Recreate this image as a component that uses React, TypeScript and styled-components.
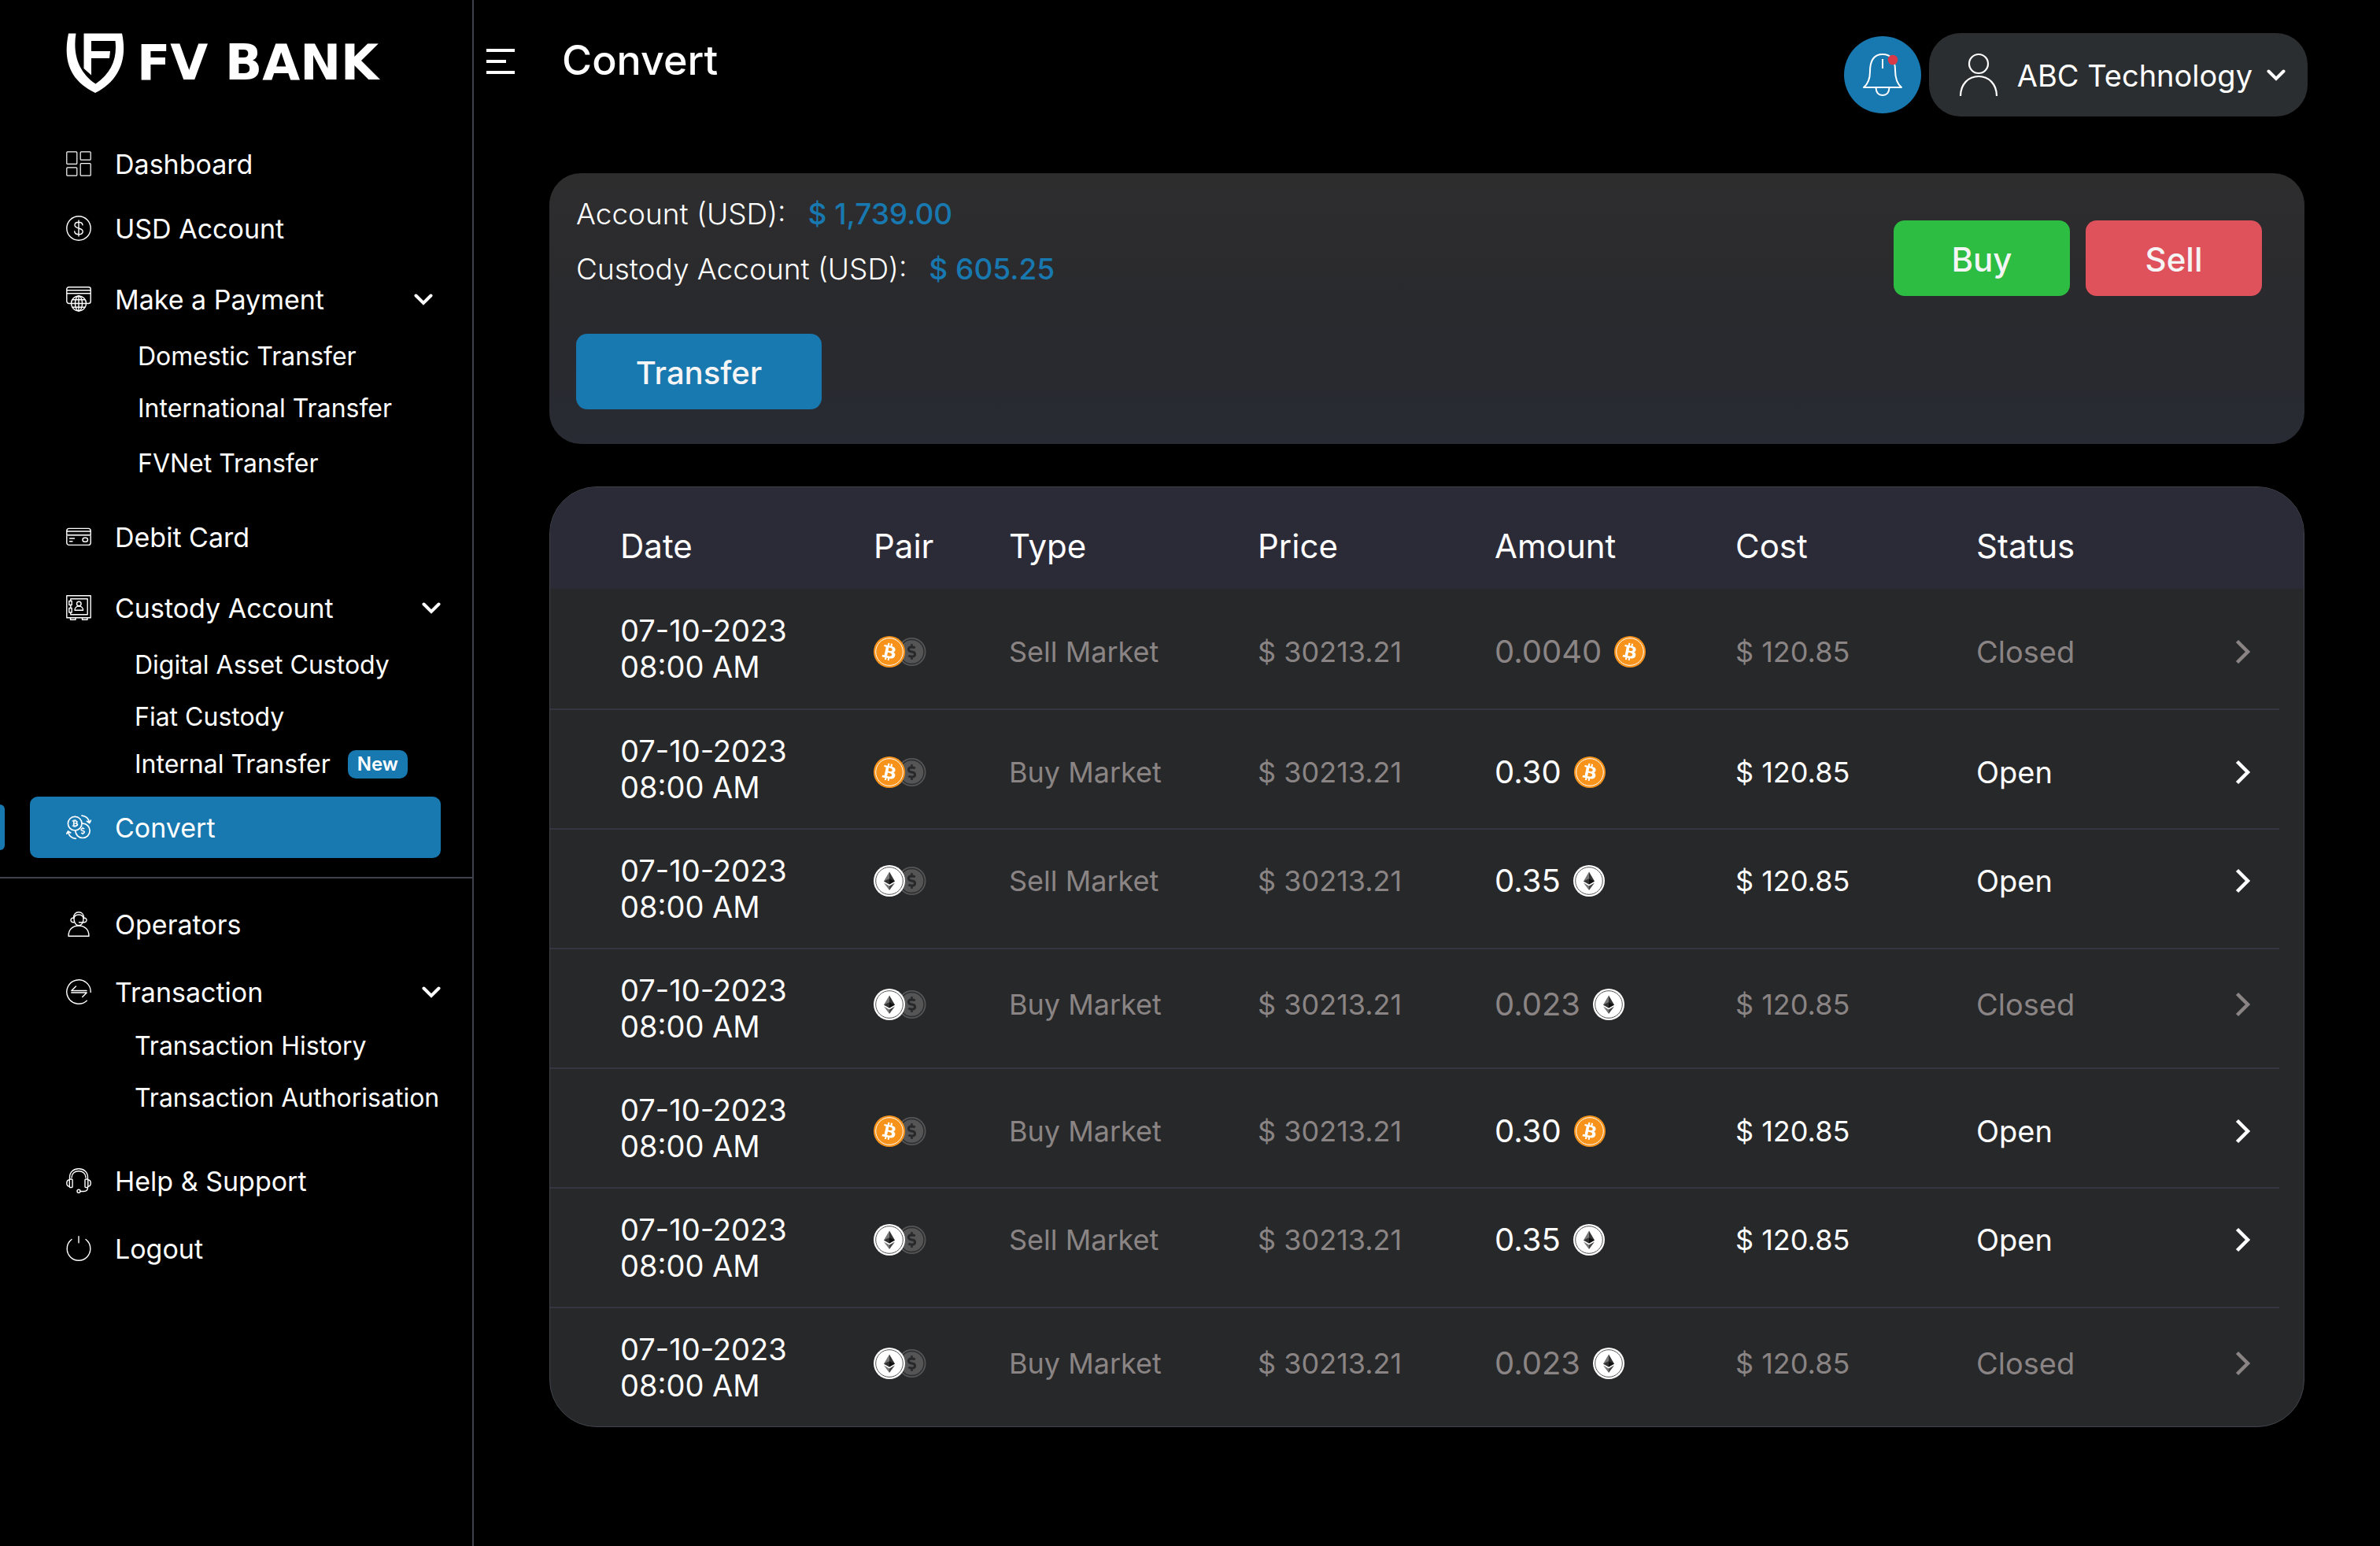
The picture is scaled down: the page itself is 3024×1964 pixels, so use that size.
import React from "react";
import styled, { createGlobalStyle } from "styled-components";
import { FaBtc, FaDollarSign } from "react-icons/fa";

const GlobalStyle = createGlobalStyle`
  *, *::before, *::after { box-sizing: border-box; }
  body {
    margin: 0;
    background: #000;
    color: #fff;
    font-family: Inter, "Liberation Sans", sans-serif;
  }
  button {
    font: inherit;
    color: inherit;
    background: none;
    border: 0;
    padding: 0;
    cursor: pointer;
  }
  a { color: inherit; text-decoration: none; }
  ul { list-style: none; margin: 0; padding: 0; }
  svg { display: block; flex: none; }
`;

/* ---------- layout ---------- */

const Page = styled.div`
  display: grid;
  grid-template-columns: 602px minmax(0, 1fr);
  min-height: 100vh;
`;

const Sidebar = styled.aside`
  border-right: 2px solid #3f424c;
`;

const Main = styled.main`
  display: flex;
  flex-direction: column;
`;

/* ---------- sidebar ---------- */

const Brand = styled.a`
  display: flex;
  align-items: center;
  gap: 16px;
  height: 160px;
  padding: 0 0 0 84px;
`;

const BrandName = styled.span`
  font-family: "DejaVu Sans", sans-serif;
  font-weight: 700;
  font-size: 62px;
  line-height: 72px;
  white-space: nowrap;
`;

const Nav = styled.nav`
  padding: 16px 0;
`;

const Item = styled.li<{ $gap?: number }>`
  position: relative;
  margin-top: ${(p) => p.$gap ?? 0}px;
  padding: 0 40px 0 38px;
`;

const rowStyles = `
  display: flex;
  align-items: center;
  gap: 30px;
  width: 100%;
  padding-left: 46px;
  text-align: left;
  font-size: 34px;
  line-height: 40px;
  white-space: nowrap;
`;

const NavLink = styled.a<{ $active?: boolean }>`
  ${rowStyles}
  height: ${(p) => (p.$active ? 78 : 64)}px;
  border-radius: 10px;
  background: ${(p) => (p.$active ? "#1878b0" : "transparent")};
`;

const NavToggle = styled.button<{ $inset?: number }>`
  ${rowStyles}
  height: 64px;
  padding-right: ${(p) => p.$inset ?? 0}px;
`;

const RowLabel = styled.span`
  flex: 1;
  padding-top: 2px;
`;

const ActiveTab = styled.span`
  position: absolute;
  left: 0;
  top: 10px;
  width: 6px;
  height: 58px;
  border-radius: 0 8px 8px 0;
  background: #1878b0;
`;

const SubList = styled.ul<{ $indent: number }>`
  margin: 0 -40px 0 ${(p) => p.$indent}px;
`;

const SubItem = styled.li<{ $gap?: number }>`
  margin-top: ${(p) => p.$gap ?? 0}px;
`;

const SubLink = styled.a`
  display: flex;
  align-items: center;
  gap: 22px;
  height: 60px;
  padding-top: 2px;
  font-size: 32px;
  line-height: 36px;
  white-space: nowrap;
`;

const NewBadge = styled.span`
  padding: 0 12px;
  border-radius: 10px;
  background: #1878b0;
  font-size: 24px;
  font-weight: 600;
  line-height: 36px;
`;

const Divider = styled.hr`
  height: 2px;
  margin: 24px 0 0;
  border: 0;
  background: #3f424c;
`;

/* ---------- header ---------- */

const Header = styled.header`
  display: flex;
  justify-content: space-between;
  align-items: flex-start;
  padding: 42px 92px 0 16px;
`;

const HeaderLeft = styled.div`
  display: flex;
  align-items: center;
  gap: 60px;
  height: 72px;
`;

const Title = styled.h1`
  margin: 0;
  padding-bottom: 2px;
  font-size: 52px;
  font-weight: 500;
  line-height: 60px;
`;

const HeaderRight = styled.div`
  display: flex;
  align-items: center;
  gap: 10px;
`;

const BellButton = styled.button`
  display: grid;
  place-items: center;
  width: 98px;
  height: 98px;
  border-radius: 50%;
  background: #1878b0;
`;

const ProfileButton = styled.button`
  display: flex;
  align-items: center;
  height: 106px;
  padding: 0 28px 0 38px;
  border-radius: 40px;
  background: #2b2e30;
  font-size: 38px;
  line-height: 48px;
  white-space: nowrap;
`;

const ProfileName = styled.span`
  margin: 0 18px 0 24px;
  padding-top: 2px;
`;

/* ---------- content ---------- */

const Content = styled.div`
  display: flex;
  flex-direction: column;
  gap: 54px;
  padding: 72px 96px 96px;
`;

const BalanceCard = styled.section`
  display: flex;
  justify-content: space-between;
  align-items: flex-start;
  padding: 17px 54px 44px 34px;
  border-radius: 40px;
  background: linear-gradient(180deg, #2e2d2e 0%, #292a2e 55%, #282b33 100%);
`;

const Balances = styled.dl`
  margin: 0 0 47px;
`;

const Balance = styled.div`
  display: flex;
  gap: 28px;
  font-size: 37px;
  line-height: 70px;
`;

const BalanceLabel = styled.dt`
  font-weight: 300;
`;

const BalanceValue = styled.dd`
  margin: 0;
  font-weight: 500;
  color: #1878b0;
`;

const ActionButton = styled.button<{ $color: string; $width: number; $size: number }>`
  width: ${(p) => p.$width}px;
  height: 96px;
  padding-top: 2px;
  border-radius: 14px;
  background: ${(p) => p.$color};
  color: #f5f5f5;
  font-size: ${(p) => p.$size}px;
  font-weight: 500;
`;

const Trade = styled.div`
  display: flex;
  gap: 20px;
  padding-top: 43px;
`;

const TableCard = styled.section`
  overflow: hidden;
  border: 1px solid #41434b;
  border-radius: 60px;
  background: #27282a;
`;

const Table = styled.table`
  display: block;
  font-size: 38px;
  line-height: 46px;
`;

const Head = styled.thead`
  display: block;
  padding-right: 31px;
  background: #2b2b38;
`;

const Body = styled.tbody`
  display: block;
  padding-right: 31px;
`;

const Row = styled.tr`
  display: grid;
  grid-template-columns: 322fr 172fr 316fr 301fr 306fr 306fr 327fr 58fr;
  align-items: center;
  padding-left: 89px;
`;

const HeadRow = styled(Row)`
  height: 129px;
  padding-top: 20px;
`;

const BodyRow = styled(Row)`
  height: 152px;
  & + & {
    border-top: 2px solid #34353f;
  }
`;

const HeadCell = styled.th`
  padding: 0;
  text-align: left;
  font-size: 42px;
  font-weight: 400;
`;

const DateCell = styled.td`
  padding: 0;
`;

/* A positive shift pads the top of the cell, a negative one the bottom. */
const Cell = styled.td<{ $shift: number; $muted?: boolean; $size?: number }>`
  display: flex;
  align-items: center;
  gap: 16px;
  padding: ${(p) => Math.max(p.$shift, 0)}px 0 ${(p) => Math.max(-p.$shift, 0)}px;
  color: ${(p) => (p.$muted ? "#8a8484" : "#fff")};
  font-size: ${(p) => p.$size ?? 38}px;
  white-space: nowrap;
`;

const RowButton = styled.button`
  padding: 0 2px;
`;

/* ---------- icons ---------- */

const Glyph = ({ children, w = 1.4 }: { children: React.ReactNode; w?: number }) => (
  <svg
    width="32"
    height="32"
    viewBox="0 0 32 32"
    fill="none"
    stroke="#fff"
    strokeWidth={w}
    strokeLinecap="round"
    strokeLinejoin="round"
    aria-hidden
  >
    {children}
  </svg>
);

const DashboardIcon = () => (
  <Glyph w={1.2}>
    <rect x="0.8" y="0.8" width="13" height="15.6" rx="1" />
    <rect x="18.2" y="0.8" width="13" height="10.4" rx="1" />
    <rect x="0.8" y="20.8" width="13" height="10.4" rx="1" />
    <rect x="18.2" y="15.6" width="13" height="15.6" rx="1" />
  </Glyph>
);

const DollarIcon = () => (
  <Glyph>
    <circle cx="16" cy="16" r="15.2" />
    <path d="M21 11.8c-.3-2.2-2.3-3.5-5-3.5s-5 1.400-5 3.700c0 5.300 10.200 2.600 10.200 8 0 2.400-2.300 3.800-5.200 3.800s-5.100-1.500-5.300-3.900M16 6v20" />
  </Glyph>
);

const PaymentIcon = () => (
  <Glyph>
    <path d="M6.500 21.500H3.600a2.800 2.800 0 0 1-2.800-2.800V3.400A2.600 2.600 0 0 1 3.400.8h25.200a2.600 2.600 0 0 1 2.600 2.600v15.300a2.800 2.800 0 0 1-2.800 2.800h-2.900M.8 4.800h30.400M.8 8.800h30.400" />
    <circle cx="16" cy="21.500" r="9.500" fill="#000" />
    <ellipse cx="16" cy="21.500" rx="4.500" ry="9.500" />
    <path d="M16 12v19M6.500 21.500h19M8 16.800h16M8 26.200h16" />
  </Glyph>
);

const CardIcon = () => (
  <Glyph>
    <rect x="0.8" y="5.400" width="30.400" height="21" rx="3" />
    <path d="M.8 9h30.400M.8 13.500h30.400" />
    <path d="M.8 14.300h30.400" stroke="#aaa" />
    <path d="M4.500 18h6M4.500 21.800h3.500" />
    <rect x="21" y="17.300" width="6.500" height="5" rx="2.500" />
  </Glyph>
);

const SafeIcon = () => (
  <Glyph>
    <path d="M.8.8h30.400v28H.8zM5.500 29v2.300h6.500V29M20.500 29v2.300H27V29" />
    <path d="M5.800 7V4.800h21.400v20H5.800v-2.200M5.800 12.500v4" />
    <path d="M3.800 7.500h3.400v5H3.800zM3.800 16.500h3.400v5.500H3.800z" />
    <circle cx="16.300" cy="11" r="2.800" />
    <path d="M11 19.200c0-3 2.300-5.200 5.300-5.200s5.300 2.200 5.300 5.200z" />
  </Glyph>
);

const ConvertIcon = () => (
  <Glyph w={1.7}>
    <circle cx="21" cy="20.300" r="9.200" />
    <circle cx="11.200" cy="11.200" r="8.800" fill="#1878b0" />
    <path d="M20 1.200c5 .6 8.400 3.600 9.500 8.400M26.400 8.300l3.300 2.200 1.800-3.400M12.200 30.400C7 29.800 3.500 26.600 2.600 21.600M.8 24.200l1.700-3.300 3.300 2" />
    <FaBtc x={6.2} y={5.700} size={10.500} color="#fff" stroke="none" />
    <FaDollarSign x={16.200} y={15.500} size={10} color="#fff" stroke="none" />
  </Glyph>
);

const OperatorIcon = () => (
  <Glyph>
    <path d="M3 31.200c0-8 5-13.200 13-13.200s13 5.200 13 13.200z" />
    <path d="M10 9.500c0 4.600 2.600 8.300 6 8.300s6-3.700 6-8.300S19.400 4 16 4s-6 1-6 5.500z" />
    <path d="M9.300 8.500C9.300 3.800 12 .8 16 .8s6.700 3 6.700 7.700M9.800 8c-2-.1-3.800.9-3.800 2.900s1.700 3 3.800 2.800M22.200 8c2-.1 3.800.9 3.800 2.900s-1.700 3-3.800 2.800M22.600 13.800H16.500" />
  </Glyph>
);

const TransactionIcon = () => (
  <Glyph>
    <path d="M31.200 16.500A15.200 15.200 0 1 0 26.300 27.200" />
    <path d="M26 14.500H6.800L12.500 9M6.800 17h19.400l-5.500 5.600" />
  </Glyph>
);

const SupportIcon = () => (
  <Glyph>
    <path d="M4.500 14V11.500C4.500 5.300 9.300.8 16 .8s11.500 4.500 11.500 10.700V14M7 12c0-5 3.700-8.300 9-8.300s9 3.300 9 8.300" />
    <rect x="4.300" y="14" width="3.800" height="10.500" rx="1" />
    <rect x="24" y="14" width="3.800" height="10.500" rx="1" />
    <path d="M4.300 14.800c-2.300.3-3.500 2-3.500 4.300s1.200 4 3.500 4.300M27.800 14.800c2.300.3 3.500 2 3.500 4.300s-1.200 4-3.500 4.300M27.500 24.500c0 3.700-2 5-5 5H18" />
    <circle cx="16" cy="29.300" r="2" />
  </Glyph>
);

const PowerIcon = () => (
  <Glyph>
    <path d="M7 4.500a15 15 0 0 0-5.800 12C1.200 24.600 7.800 31.200 16 31.200s14.800-6.600 14.800-14.700a15 15 0 0 0-5.800-12M16 .8v8" />
  </Glyph>
);

const ShieldLogo = () => (
  <svg width="74" height="76" viewBox="0 0 74 76" fill="#fff" aria-hidden>
    <path d="M3 .5h9.500C8.500 26 15 49 37.500 64.500 58 50.500 65 32 62.500 10H32v13h24l-1 9H32v21.500L22.500 45V.5H71C78 33 68 60 37 76 4 60-4 34 3 .5z" />
  </svg>
);

const ChevronDown = () => (
  <svg width="24" height="16" viewBox="0 0 24 16" fill="none" stroke="#fff" strokeWidth="4" strokeLinecap="round" aria-hidden>
    <path d="M2.500 3.500l9.500 9.500 9.500-9.500" />
  </svg>
);

const ChevronRight = () => (
  <svg width="20" height="32" viewBox="0 0 20 32" fill="none" stroke="currentColor" strokeWidth="4.500" aria-hidden>
    <path d="M2.500 2.500L16 16 2.500 29.500" />
  </svg>
);

const MenuIcon = () => (
  <svg width="36" height="32" viewBox="0 0 36 32" fill="#fff" aria-hidden>
    <path d="M0 0h36v4H0zM0 14h25v4H0zM0 28h36v4H0z" />
  </svg>
);

const BellIcon = () => (
  <svg width="52" height="56" viewBox="0 0 52 56" fill="none" stroke="#fff" strokeWidth="2" strokeLinejoin="round" aria-hidden>
    <path d="M2 44c5-4 8-11 8-20C10 9 16 2 26 2s16 7 16 20c0 10 3 18 8 22zM26 8v12M17.500 44.500c.3 6 3.500 9.500 8.500 9.500s8.200-3.500 8.500-9.500" />
    <circle cx="39" cy="9" r="6.300" fill="#d93a47" stroke="none" />
  </svg>
);

const UserIcon = () => (
  <svg width="50" height="56" viewBox="0 0 50 56" fill="none" stroke="#fff" strokeWidth="2.200" aria-hidden>
    <circle cx="25" cy="14" r="12" />
    <path d="M2 55C2 40 12 30 25 30s23 10 23 25" />
  </svg>
);

type CoinKind = "btc" | "eth";

const CoinFace = ({ kind }: { kind: CoinKind }) =>
  kind === "btc" ? (
    <g>
      <circle cx="20" cy="20" r="20" fill="#f7931a" />
      <circle cx="20" cy="20" r="17.300" fill="none" stroke="#fff" />
      <g transform="rotate(12 20 20)">
        <FaBtc x={9} y={9} size={22} color="#fff" />
      </g>
    </g>
  ) : (
    <g>
      <circle cx="20" cy="20" r="20" fill="#fff" />
      <circle cx="20" cy="20" r="17.300" fill="none" stroke="#555" />
      <path d="M20 8.500L13 20.500l7 4z" fill="#777" />
      <path d="M20 8.500l7 12-7 4z" fill="#333" />
      <path d="M13 20.500l7-3.200v7.200z" fill="#333" />
      <path d="M20 17.300l7 3.200-7 4z" fill="#111" />
      <path d="M13 22.500l7 4v5.500z" fill="#777" />
      <path d="M27 22.500l-7 4v5.500z" fill="#444" />
    </g>
  );

const Coin = ({ kind }: { kind: CoinKind }) => (
  <svg width="40" height="40" viewBox="0 0 40 40" aria-hidden>
    <CoinFace kind={kind} />
  </svg>
);

const CoinPair = ({ kind }: { kind: CoinKind }) => (
  <svg width="68" height="40" viewBox="0 0 68 40" role="img" aria-label={`${kind.toUpperCase()} / USD`}>
    <circle cx="48.500" cy="20" r="18" fill="#555" />
    <circle cx="48.500" cy="20" r="15.500" fill="none" stroke="#2b2c2e" strokeWidth="1.400" />
    <FaDollarSign x={38.5} y={10} size={20} color="#28292b" />
    <CoinFace kind={kind} />
  </svg>
);

/* ---------- data ---------- */

type Order = {
  kind: CoinKind;
  type: string;
  amount: string;
  open: boolean;
  shift: number;
};

const orders: Order[] = [
  { kind: "btc", type: "Sell Market", amount: "0.0040", open: false, shift: 8 },
  { kind: "btc", type: "Buy Market", amount: "0.30", open: true, shift: 8 },
  { kind: "eth", type: "Sell Market", amount: "0.35", open: true, shift: -20 },
  { kind: "eth", type: "Buy Market", amount: "0.023", open: false, shift: -10 },
  { kind: "btc", type: "Buy Market", amount: "0.30", open: true, shift: 8 },
  { kind: "eth", type: "Sell Market", amount: "0.35", open: true, shift: -20 },
  { kind: "eth", type: "Buy Market", amount: "0.023", open: false, shift: -10 },
];

const columns = ["Date", "Pair", "Type", "Price", "Amount", "Cost", "Status"];

/* ---------- parts ---------- */

const Sub = ({ label, gap, badge }: { label: string; gap?: number; badge?: string }) => (
  <SubItem $gap={gap}>
    <SubLink href="#">
      {label}
      {badge && <NewBadge>{badge}</NewBadge>}
    </SubLink>
  </SubItem>
);

const Link = ({ icon, label, gap, active }: { icon: React.ReactNode; label: string; gap?: number; active?: boolean }) => (
  <Item $gap={gap}>
    {active && <ActiveTab />}
    <NavLink href="#" $active={active} aria-current={active ? "page" : undefined}>
      {icon}
      <RowLabel>{label}</RowLabel>
    </NavLink>
  </Item>
);

const Group = ({
  icon,
  label,
  gap,
  inset,
  indent,
  children,
}: {
  icon: React.ReactNode;
  label: string;
  gap?: number;
  inset?: number;
  indent: number;
  children: React.ReactNode;
}) => (
  <Item $gap={gap}>
    <NavToggle type="button" aria-expanded $inset={inset}>
      {icon}
      <RowLabel>{label}</RowLabel>
      <ChevronDown />
    </NavToggle>
    <SubList $indent={indent}>{children}</SubList>
  </Item>
);

const OrderRow = ({ order }: { order: Order }) => {
  const { kind, type, amount, open, shift } = order;
  return (
    <BodyRow>
      <DateCell>
        07-10-2023
        <br />
        08:00 AM
      </DateCell>
      <Cell $shift={shift}>
        <CoinPair kind={kind} />
      </Cell>
      <Cell $shift={shift} $size={36} $muted>{type}</Cell>
      <Cell $shift={shift} $size={36} $muted>$ 30213.21</Cell>
      <Cell $shift={shift} $size={40} $muted={!open}>
        {amount}
        <Coin kind={kind} />
      </Cell>
      <Cell $shift={shift} $size={36} $muted={!open}>$ 120.85</Cell>
      <Cell $shift={shift} $muted={!open}>{open ? "Open" : "Closed"}</Cell>
      <Cell $shift={shift} $muted={!open}>
        <RowButton type="button" aria-label="Order details">
          <ChevronRight />
        </RowButton>
      </Cell>
    </BodyRow>
  );
};

export default function App() {
  return (
    <>
      <GlobalStyle />
      <Page>
        <Sidebar>
          <Brand href="#">
            <ShieldLogo />
            <BrandName>FV BANK</BrandName>
          </Brand>
          <Nav>
            <ul>
              <Link icon={<DashboardIcon />} label="Dashboard" />
              <Link icon={<DollarIcon />} label="USD Account" gap={18} />
              <Group icon={<PaymentIcon />} label="Make a Payment" gap={26} inset={10} indent={137}>
                <Sub label="Domestic Transfer" gap={10} />
                <Sub label="International Transfer" gap={6} />
                <Sub label="FVNet Transfer" gap={10} />
              </Group>
              <Link icon={<CardIcon />} label="Debit Card" gap={32} />
              <Group icon={<SafeIcon />} label="Custody Account" gap={26} indent={133}>
                <Sub label="Digital Asset Custody" gap={10} />
                <Sub label="Fiat Custody" gap={6} />
                <Sub label="Internal Transfer" badge="New" />
              </Group>
              <Link icon={<ConvertIcon />} label="Convert" gap={12} active />
            </ul>
            <Divider />
            <ul>
              <Link icon={<OperatorIcon />} label="Operators" gap={26} />
              <Group icon={<TransactionIcon />} label="Transaction" gap={22} indent={133}>
                <Sub label="Transaction History" gap={6} />
                <Sub label="Transaction Authorisation" gap={6} />
              </Group>
              <Link icon={<SupportIcon />} label="Help & Support" gap={44} />
              <Link icon={<PowerIcon />} label="Logout" gap={22} />
            </ul>
          </Nav>
        </Sidebar>

        <Main>
          <Header>
            <HeaderLeft>
              <button type="button" aria-label="Toggle menu">
                <MenuIcon />
              </button>
              <Title>Convert</Title>
            </HeaderLeft>
            <HeaderRight>
              <BellButton type="button" aria-label="Notifications">
                <BellIcon />
              </BellButton>
              <ProfileButton type="button" aria-haspopup="menu">
                <UserIcon />
                <ProfileName>ABC Technology</ProfileName>
                <ChevronDown />
              </ProfileButton>
            </HeaderRight>
          </Header>

          <Content>
            <BalanceCard>
              <div>
                <Balances>
                  <Balance>
                    <BalanceLabel>Account (USD):</BalanceLabel>
                    <BalanceValue>$ 1,739.00</BalanceValue>
                  </Balance>
                  <Balance>
                    <BalanceLabel>Custody Account (USD):</BalanceLabel>
                    <BalanceValue>$ 605.25</BalanceValue>
                  </Balance>
                </Balances>
                <ActionButton type="button" $color="#1878b0" $width={312} $size={40}>Transfer</ActionButton>
              </div>
              <Trade>
                <ActionButton type="button" $color="#2cbd42" $width={224} $size={42}>Buy</ActionButton>
                <ActionButton type="button" $color="#df525c" $width={224} $size={42}>Sell</ActionButton>
              </Trade>
            </BalanceCard>

            <TableCard>
              <Table>
                <Head>
                  <HeadRow>
                    {columns.map((c) => (
                      <HeadCell key={c} scope="col">{c}</HeadCell>
                    ))}
                  </HeadRow>
                </Head>
                <Body>
                  {orders.map((o, i) => (
                    <OrderRow key={i} order={o} />
                  ))}
                </Body>
              </Table>
            </TableCard>
          </Content>
        </Main>
      </Page>
    </>
  );
}
